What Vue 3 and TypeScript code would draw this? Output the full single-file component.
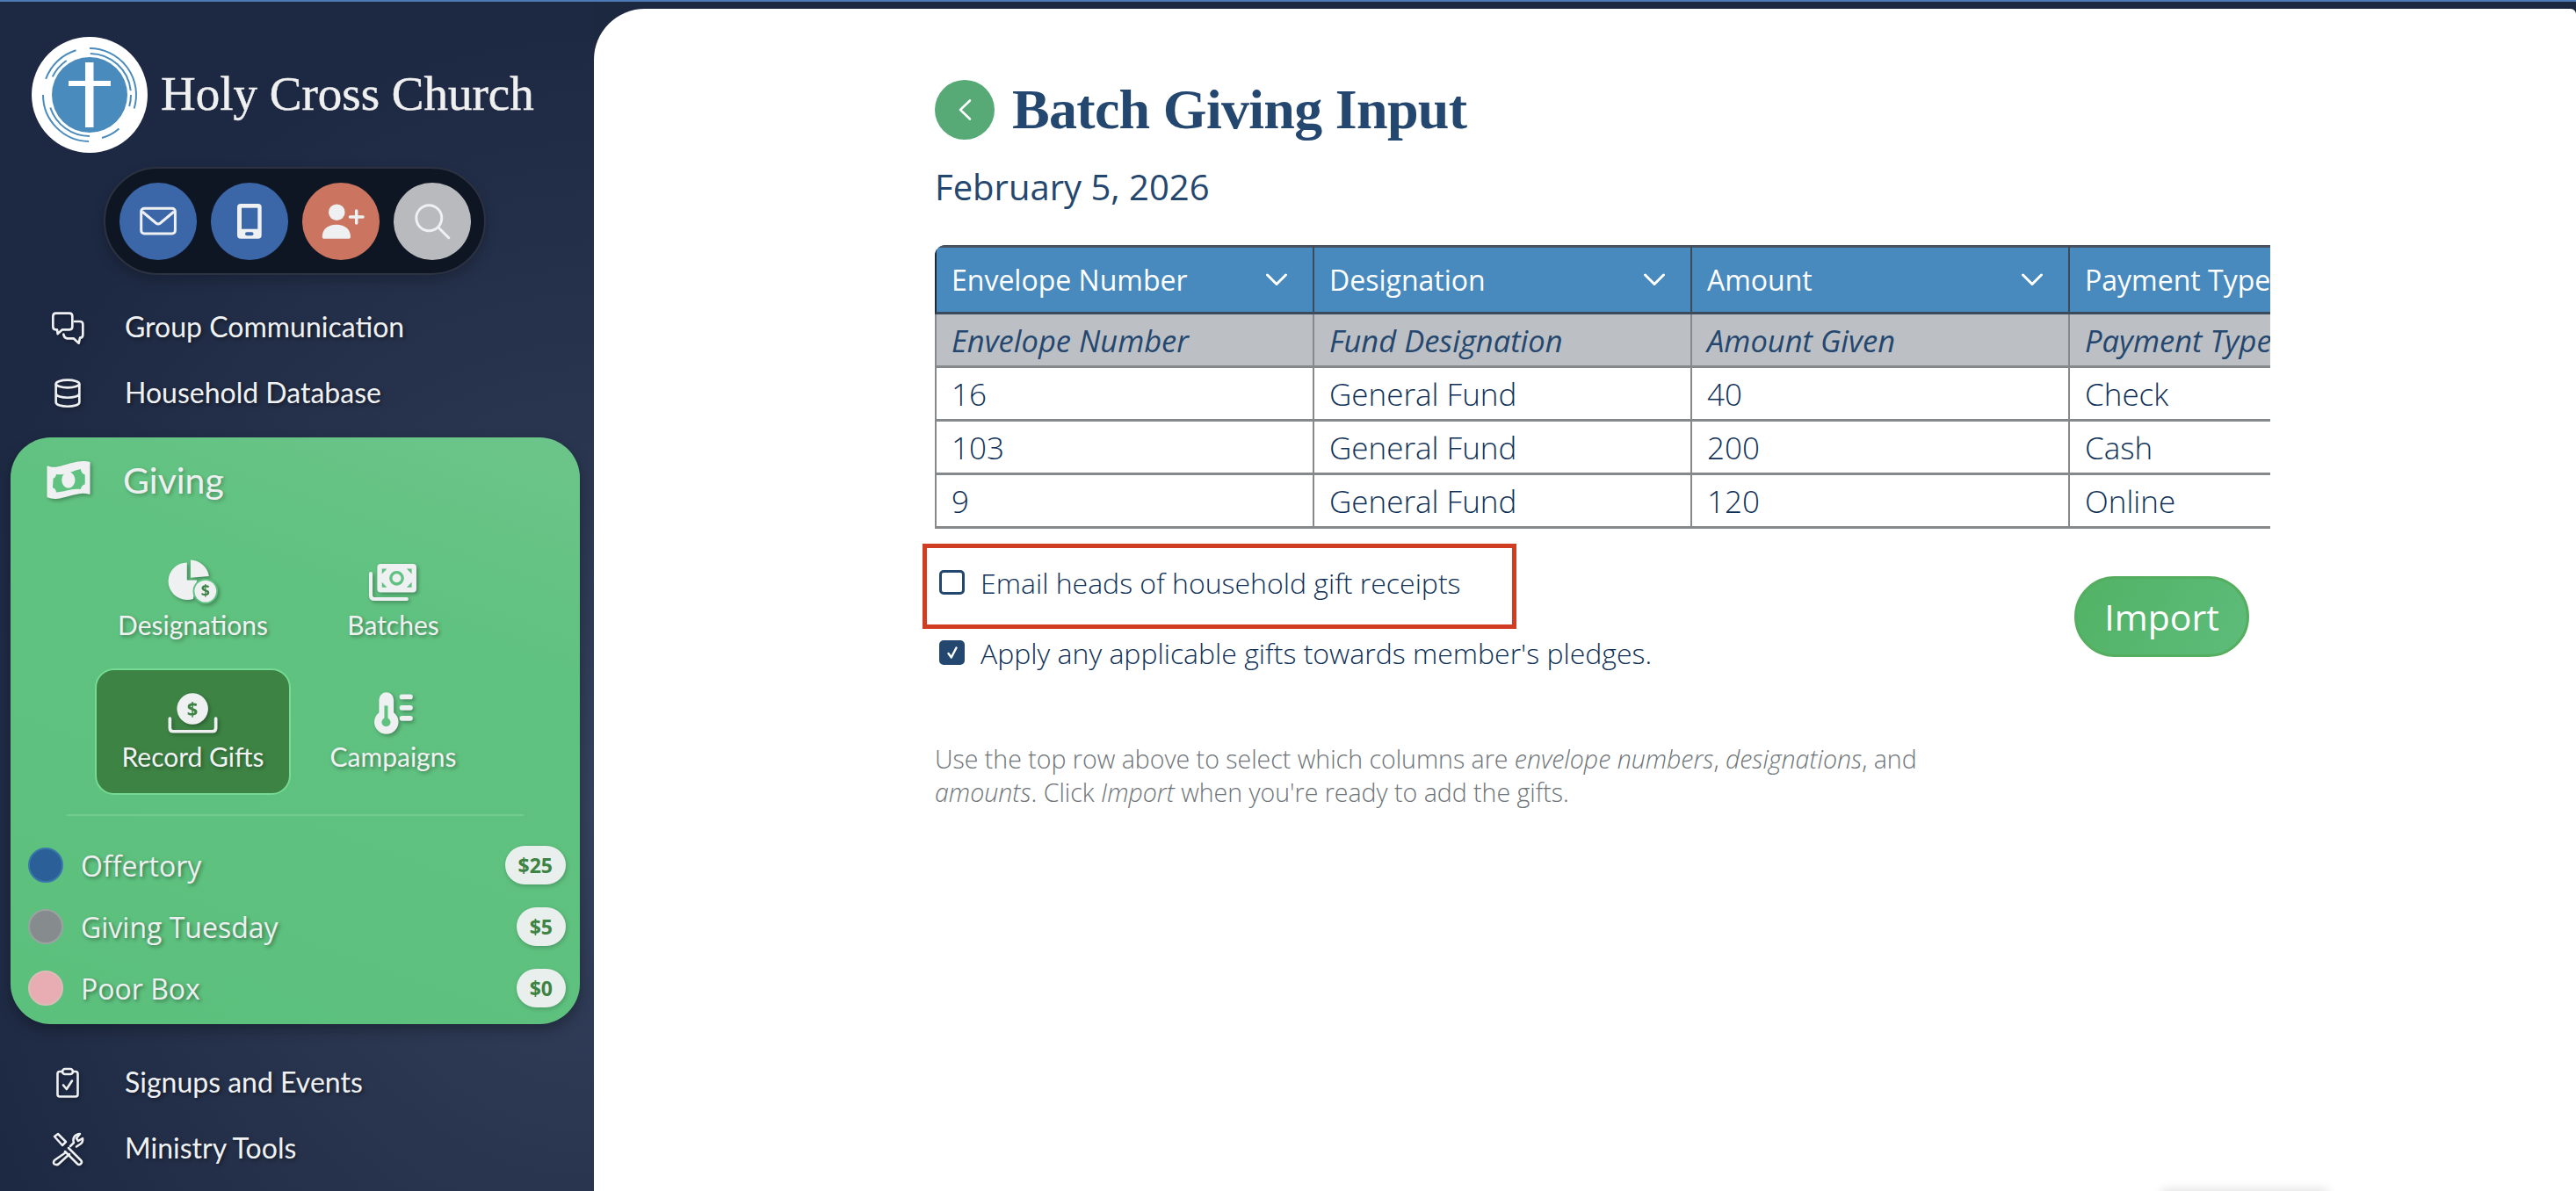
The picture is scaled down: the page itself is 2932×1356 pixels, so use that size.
<script setup lang="ts">
function arc(r: number, a: number, b: number): string {
  const p = (d: number) => {
    const t = (d * Math.PI) / 180
    return `${(66 + r * Math.sin(t)).toFixed(2)} ${(66 - r * Math.cos(t)).toFixed(2)}`
  }
  return `M${p(a)} A${r} ${r} 0 0 1 ${p(b)}`
}
const rings: string[] = [
  arc(53, 0, 107), arc(47, 1, 84), arc(47, 90, 106),
  arc(51, 139, 164), arc(53, 181, 270), arc(47, 180, 252),
  arc(53, 290, 343), arc(47, 296, 326),
]
const columns = [
  { head: 'Envelope Number', sub: 'Envelope Number', arrow: true },
  { head: 'Designation', sub: 'Fund Designation', arrow: true },
  { head: 'Amount', sub: 'Amount Given', arrow: true },
  { head: 'Payment Type', sub: 'Payment Type', arrow: false },
]
const rows = [
  ['16', 'General Fund', '40', 'Check'],
  ['103', 'General Fund', '200', 'Cash'],
  ['9', 'General Fund', '120', 'Online'],
]
const funds = [
  { name: 'Offertory', amount: '$25', cls: 'dot-blue' },
  { name: 'Giving Tuesday', amount: '$5', cls: 'dot-gray' },
  { name: 'Poor Box', amount: '$0', cls: 'dot-pink' },
]
</script>

<template>
  <div class="page">
    <div class="topline"></div>
    <div class="shell">
      <aside class="sidebar">
        <div class="brand">
          <svg class="logo" width="132" height="132" viewBox="0 0 132 132">
            <circle cx="66" cy="66" r="66" fill="#fff" />
            <circle cx="66" cy="66" r="43" fill="#4a8bbd" />
            <rect x="61" y="29" width="9.5" height="74" fill="#fff" />
            <rect x="42" y="50" width="48" height="6" fill="#fff" />
            <path v-for="d in rings" :key="d" :d="d" fill="none" stroke="#4a8bbd" stroke-width="2" />
          </svg>
          <span class="church">Holy Cross Church</span>
        </div>

        <div class="pill">
          <svg class="round" viewBox="0 0 88 88">
            <circle cx="44" cy="44" r="44" fill="#3b66a8" />
            <rect x="24.7" y="29.3" width="38.7" height="28.7" rx="3.5" fill="none" stroke="#eef0f2" stroke-width="3" />
            <path d="M26 33 L41.5 46 Q44 48 46.5 46 L62 33" fill="none" stroke="#eef0f2" stroke-width="3" />
          </svg>
          <svg class="round" viewBox="0 0 88 88">
            <circle cx="44" cy="44" r="44" fill="#3b66a8" />
            <rect x="30" y="24" width="27.7" height="39.7" rx="4" fill="#eef0f2" />
            <rect x="35" y="28.7" width="18.3" height="24" fill="#3b66a8" />
            <rect x="39" y="56.3" width="9.5" height="4" rx="2" fill="#3b66a8" />
          </svg>
          <svg class="round" viewBox="0 0 88 88">
            <circle cx="44" cy="44" r="44" fill="#cb7560" />
            <circle cx="39.3" cy="33.7" r="9.3" fill="#eef0f2" />
            <path d="M22.7 62 C22.7 53 29 47.7 38.8 47.7 S55 53 55 62 Q55 63.7 53 63.7 H24.7 Q22.7 63.7 22.7 62 Z" fill="#eef0f2" />
            <path d="M61.7 32 V46 M54.5 39 H69" stroke="#eef0f2" stroke-width="3.5" stroke-linecap="round" />
          </svg>
          <svg class="round" viewBox="0 0 88 88">
            <circle cx="44" cy="44" r="44" fill="#b9babd" />
            <circle cx="40.3" cy="40.3" r="14.5" fill="none" stroke="#eef0f2" stroke-width="3" />
            <path d="M51 51 L62.7 62.7" stroke="#eef0f2" stroke-width="3" stroke-linecap="round" />
          </svg>
        </div>

        <nav class="nav nav-top">
          <a class="nav-row">
            <span class="nav-icon">
              <svg class="ico" width="40" height="40" viewBox="50 35 120 120" fill="none" stroke="#eef0f2" stroke-width="8" stroke-linejoin="round" stroke-linecap="round">
                <path d="M70 46 H116 Q126 46 126 56 V92 Q126 102 116 102 H92 L76 116 L74 102 H70 Q60 102 60 92 V56 Q60 46 70 46 Z" />
                <path d="M134 74 H152 Q162 74 162 84 V120 Q162 130 152 130 L148 148 L130 132 H108 Q98 130 96 118" />
              </svg>
            </span>
            <span class="nav-text">Group Communication</span>
          </a>
          <a class="nav-row">
            <span class="nav-icon">
              <svg class="ico" width="40" height="40" viewBox="52 265 120 120" fill="none" stroke="#eef0f2" stroke-width="8">
                <ellipse cx="112" cy="292" rx="40" ry="13" />
                <path d="M72 292 V355 C72 374 152 374 152 355 V292 M72 325 C72 344 152 344 152 325" />
              </svg>
            </span>
            <span class="nav-text">Household Database</span>
          </a>
        </nav>

        <section class="card">
          <header class="card-head">
            <svg class="ico bill" width="53" height="47" viewBox="30 548 160 140">
              <path d="M37 572 C70 590 130 545 180 558 L180 665 C130 650 80 695 37 675 Z" fill="#eef0f2" stroke="#eef0f2" stroke-width="5" stroke-linejoin="round" />
              <path d="M56 612 C60 612 66 605 66 598 C95 604 125 585 150 580 C152 592 158 598 165 600 L165 632 C158 634 152 640 150 650 C120 645 95 660 66 660 C66 652 60 645 54 645 Z" fill="#60c280" />
              <ellipse cx="108" cy="618" rx="23" ry="28" fill="#eef0f2" />
            </svg>
            <span class="card-title">Giving</span>
          </header>

          <div class="tiles">
            <a class="tile">
              <svg class="ico" width="63" height="56" viewBox="60 30 190 170">
                <path d="M134 47 A67 67 0 0 0 134 181 Q145 181 156 178 L170 110 L134 110 Z" fill="#eef0f2" />
                <path d="M147 38 A70 70 0 0 1 213 96 L147 102 Z" fill="#eef0f2" />
                <circle cx="200" cy="150" r="45" fill="#60c280" />
                <circle cx="200" cy="150" r="39" fill="#eef0f2" />
                <text x="200" y="170" text-anchor="middle" class="ico-dollar" fill="#3d8444">$</text>
              </svg>
              <span class="tile-text">Designations</span>
            </a>
            <a class="tile">
              <svg class="ico" width="62" height="47" viewBox="745 35 185 140">
                <path d="M760 78 V152 Q760 165 773 165 H882" fill="none" stroke="#eef0f2" stroke-width="12" stroke-linecap="round" />
                <rect x="782" y="45" width="133" height="97" rx="12" fill="#eef0f2" />
                <path d="M798 62 H815 L798 80 Z M899 62 H882 L899 80 Z M798 125 H815 L798 107 Z M899 125 H882 L899 107 Z" fill="#60c280" />
                <circle cx="848" cy="94" r="20" fill="#eef0f2" stroke="#60c280" stroke-width="10" />
              </svg>
              <span class="tile-text">Batches</span>
            </a>
            <a class="tile tile-active">
              <svg class="ico" width="62" height="50" viewBox="60 485 185 150">
                <circle cx="150" cy="545" r="53" fill="#eef0f2" />
                <text x="150" y="568" text-anchor="middle" class="ico-dollar big" fill="#3d8444">$</text>
                <path d="M73 578 V610 Q73 622 85 622 H217 Q229 622 229 610 V578" fill="none" stroke="#eef0f2" stroke-width="11" stroke-linecap="round" />
              </svg>
              <span class="tile-text">Record Gifts</span>
            </a>
            <a class="tile">
              <svg class="ico" width="52" height="52" viewBox="755 478 155 155">
                <path d="M783 510 A25 25 0 0 1 833 510 V553 A41 41 0 1 1 783 553 Z" fill="#eef0f2" />
                <circle cx="807" cy="586" r="15" fill="#60c280" />
                <rect x="801" y="530" width="12" height="50" fill="#60c280" />
                <path d="M861 500 H889 M861 537 H889 M861 573 H889" stroke="#eef0f2" stroke-width="17" stroke-linecap="round" />
              </svg>
              <span class="tile-text">Campaigns</span>
            </a>
          </div>

          <div class="divider"></div>

          <ul class="funds">
            <li v-for="f in funds" :key="f.name" class="fund">
              <span class="dot" :class="f.cls"></span>
              <span class="fund-name">{{ f.name }}</span>
              <span class="fund-amt">{{ f.amount }}</span>
            </li>
          </ul>
        </section>

        <nav class="nav nav-bottom">
          <a class="nav-row">
            <span class="nav-icon">
              <svg class="ico" width="40" height="40" viewBox="0 0 40 40" fill="none" stroke="#eef0f2" stroke-width="2.6" stroke-linejoin="round" stroke-linecap="round">
                <path d="M14 7 H11 Q8.5 7 8.5 9.5 V33 Q8.5 35.5 11 35.5 H29 Q31.5 35.5 31.5 33 V9.5 Q31.5 7 29 7 H26" />
                <rect x="14" y="4" width="12" height="6" rx="3" />
                <path d="M15 22.5 L18.8 27 L25 17.5" />
              </svg>
            </span>
            <span class="nav-text">Signups and Events</span>
          </a>
          <a class="nav-row">
            <span class="nav-icon">
              <svg class="ico" width="40" height="40" viewBox="0 0 40 40" fill="none" stroke="#eef0f2" stroke-width="2.5" stroke-linejoin="round" stroke-linecap="round">
                <path d="M21 19 L35 33 Q37 35 35 37 Q33 39 31 37 L17 23" />
                <path d="M5 6 L9 3 L18 12 L14 16 Z" />
                <path d="M18 24 L5 33 Q3 36 5 37.5 Q8 39 10 37 L22 26" />
                <path d="M23 17 L27 13 Q25 7 30 4 Q32 3 34 3 L30 8 L32 11 L37 8 Q38 13 33 15.5 L30 17.5" />
              </svg>
            </span>
            <span class="nav-text">Ministry Tools</span>
          </a>
        </nav>
      </aside>

      <main class="main">
        <div class="content">
          <div class="title-row">
            <button class="back" type="button" aria-label="Back">
              <svg width="20" height="28" viewBox="0 0 20 28" fill="none" stroke="#fff" stroke-width="2.6" stroke-linecap="round" stroke-linejoin="round">
                <path d="M16 3.5 L5 14 L16 24.5" />
              </svg>
            </button>
            <h1 class="title">Batch Giving Input</h1>
          </div>
          <div class="date">February 5, 2026</div>

          <div class="table-wrap">
            <table class="table">
              <thead>
                <tr class="head-row">
                  <th v-for="c in columns" :key="c.head">
                    <span class="th-in">
                      <span>{{ c.head }}</span>
                      <svg v-if="c.arrow" width="26" height="15" viewBox="0 0 26 15" fill="none" stroke="#fff" stroke-width="3" stroke-linecap="round" stroke-linejoin="round">
                        <path d="M2.5 2 L13 12.5 L23.5 2" />
                      </svg>
                    </span>
                  </th>
                </tr>
                <tr class="sub-row">
                  <td v-for="c in columns" :key="c.sub">{{ c.sub }}</td>
                </tr>
              </thead>
              <tbody>
                <tr v-for="r in rows" :key="r[0]" class="data-row">
                  <td v-for="(v, i) in r" :key="i">{{ v }}</td>
                </tr>
              </tbody>
            </table>
          </div>

          <div class="action-row">
            <div class="checks">
              <label class="check">
                <span class="box"></span>
                <span>Email heads of household gift receipts</span>
                <span class="annotation"></span>
              </label>
              <label class="check">
                <span class="box box-on">
                  <svg width="16" height="20" viewBox="0 0 16 20" fill="none" stroke="#fff" stroke-width="2.4" stroke-linecap="round" stroke-linejoin="round">
                    <path d="M3.5 11 L6.8 15.5 L12.5 4.5" />
                  </svg>
                </span>
                <span>Apply any applicable gifts towards member's pledges.</span>
              </label>
            </div>
            <button class="import" type="button">Import</button>
          </div>

          <p class="help">
            Use the top row above to select which columns are <em>envelope numbers</em>, <em>designations</em>, and
            <em>amounts</em>. Click <em>Import</em> when you're ready to add the gifts.
          </p>
        </div>
        <div class="edge-shadow"></div>
      </main>
    </div>
  </div>
</template>

<style>
html, body { margin: 0; height: 100%; overflow: hidden; background: #1c2840; }
</style>

<style scoped>
.page { height: 1356px; display: flex; flex-direction: column; font-family: "Open Sans", "Liberation Sans", sans-serif; background: #1c2840; overflow: hidden; }
.topline { height: 2px; background: #4f79b5; flex: none; }
.shell { flex: 1; display: flex; min-height: 0; }

.sidebar {
  width: 676px; flex: none; display: flex; flex-direction: column; box-sizing: border-box;
  background: radial-gradient(ellipse 760px 900px at 100% 68%, #35425d 0%, #2a3650 45%, #1d2943 100%);
}
.brand { display: flex; align-items: center; margin: 40px 0 0 36px; gap: 15px; }
.logo { flex: none; display: block; }
.church { font-family: "Liberation Serif", serif; font-size: 55px; color: #f0f0f0; white-space: nowrap; -webkit-text-stroke: .5px #f0f0f0; padding-bottom: 4px; }
.pill {
  display: flex; gap: 16px; align-self: flex-start; margin: 16px 0 0 118px; padding: 16px; box-sizing: border-box;
  height: 123px; width: 435px; align-items: center; background: #0f1623; border: 2px solid #2c3242; border-radius: 62px;
  box-shadow: 0 6px 14px rgba(0, 0, 0, .22);
}
.round { width: 88px; height: 88px; flex: none; display: block; }

.nav { display: flex; flex-direction: column; }
.nav-top { margin-top: 22px; }
.nav-bottom { margin-top: 29px; }
.nav-row { height: 75px; display: flex; align-items: center; padding-left: 47px; }
.nav-icon { width: 60px; display: flex; justify-content: center; flex: none; }
.nav-text { margin-left: 35px; padding-bottom: 2px; font-family: Lato, sans-serif; font-size: 32px; color: #f0f1f2; text-shadow: 2px 2px 4px rgba(0, 0, 0, .45); white-space: nowrap; }
.ico { display: block; filter: drop-shadow(2px 2px 2px rgba(0, 0, 0, .3)); }

.card {
  margin: 13px 16px 0 12px; height: 668px; box-sizing: border-box; border-radius: 46px;
  background: linear-gradient(200deg, #6cc58a 0%, #60c280 30%, #5cc07d 100%);
  box-shadow: 0 6px 16px rgba(0, 0, 0, .3); display: flex; flex-direction: column;
}
.card-head { height: 96px; margin-bottom: 17px; display: flex; align-items: center; padding-left: 40px; flex: none; }
.card-title { margin-left: 35px; font-family: Lato, sans-serif; font-size: 41px; color: #eef0f0; text-shadow: 2px 2px 4px rgba(0, 0, 0, .25); }
.tiles { display: grid; grid-template-columns: 223px 223px; grid-auto-rows: 144px; gap: 6px 5px; margin-left: 96px; }
.tile { box-sizing: border-box; display: flex; flex-direction: column; align-items: center; border: 2px solid transparent; border-radius: 22px; padding-top: 22px; }
.tile .ico { height: 54px; }
.tile-active { background: #3d8444; border-color: #75da93; }
.tile-text { margin-top: 2px; line-height: 40px; font-family: Lato, sans-serif; font-size: 30px; color: #f0f2f2; text-shadow: 2px 2px 4px rgba(0, 0, 0, .35); white-space: nowrap; }
.ico-dollar { font-family: "Open Sans", sans-serif; font-weight: 700; font-size: 56px; }
.ico-dollar.big { font-size: 66px; }
.divider { height: 2px; margin: 22px 64px 0 64px; background: #74cb90; flex: none; }
.funds { list-style: none; margin: 21px 0 0; padding: 0 16px 0 20px; }
.fund { height: 70px; display: flex; align-items: center; }
.dot { width: 40px; height: 40px; box-sizing: border-box; border-radius: 50%; border: 2px solid; flex: none; }
.dot-blue { background: #2a5f98; border-color: #3a78ab; }
.dot-gray { background: #868c8d; border-color: #9aa3a1; }
.dot-pink { background: #e8adb2; border-color: #dcbcb6; }
.fund-name { margin-left: 20px; font-size: 32px; color: #eef0f0; text-shadow: 2px 2px 4px rgba(0, 0, 0, .4); flex: 1; }
.fund-amt { height: 44px; box-sizing: border-box; padding: 0 15px; display: flex; align-items: center; border-radius: 22px; background: #e8efec; color: #3d8444; font-weight: 700; font-size: 23px; box-shadow: 1px 2px 5px rgba(0, 0, 0, .2); }

.main { flex: 1; min-width: 0; margin-top: 8px; background: #fff; border-top-left-radius: 58px; border-top-right-radius: 6px; position: relative; overflow: hidden; }
.content { padding: 81px 0 0 388px; width: 1908px; box-sizing: border-box; color: #24476f; }
.title-row { display: flex; align-items: center; gap: 20px; height: 68px; }
.back { width: 68px; height: 68px; border: 0; padding: 0; border-radius: 50%; background: #57a976; display: flex; align-items: center; justify-content: center; flex: none; }
.title { margin: 0; font-family: "Liberation Serif", serif; font-weight: 700; font-size: 64px; line-height: 68px; letter-spacing: -.7px; color: #24476f; white-space: nowrap; }
.date { margin-top: 30px; font-size: 40px; line-height: 48px; }

.table-wrap { margin-top: 42px; width: 1520px; overflow: hidden; border-top-left-radius: 12px; }
.table { border-collapse: separate; border-spacing: 0; table-layout: fixed; width: 1722px; font-size: 32px; }
.table th, .table td { padding: 0 0 0 17px; box-sizing: border-box; width: 430px; text-align: left; white-space: nowrap; overflow: hidden; border-right: 2px solid #85898b; border-bottom: 3px solid #85898b; }
.table th:first-child, .table td:first-child { width: 432px; border-left: 2px solid #85898b; }
.head-row th { height: 79px; background: #488abd; color: #fff; font-weight: 400; border-top: 3px solid #47525e; border-right-color: #3c4b5c; border-bottom-color: #3c4b5c; }
.head-row th:first-child { border-left-color: #1e2a38; }
.th-in { display: flex; align-items: center; justify-content: space-between; padding-right: 28px; }
.sub-row td { height: 61px; background: #bcc0c5; font-style: italic; font-size: 34.5px; color: #24476f; }
.data-row td { height: 61px; font-weight: 300; font-size: 35px; color: #0f3158; }

.action-row { width: 1520px; margin-top: 41px; display: flex; justify-content: space-between; align-items: center; }
.checks { display: flex; flex-direction: column; gap: 40px; padding-left: 5px; font-size: 32px; font-weight: 300; color: #0f3158; }
.check { display: flex; align-items: center; gap: 18px; height: 40px; position: relative; white-space: nowrap; }
.box { width: 29px; height: 28px; box-sizing: border-box; border: 3.5px solid #24476f; border-radius: 5px; flex: none; display: flex; align-items: center; justify-content: center; }
.box-on { background: #24476f; }
.annotation { position: absolute; left: -19px; top: -24px; width: 676px; height: 97px; box-sizing: border-box; border: 5px solid #d13d22; pointer-events: none; }
.import { width: 199px; height: 92px; margin: 0 24px 2px 0; padding: 0; border: 3px solid #55ae60; border-radius: 46px; background: linear-gradient(120deg, #52b265, #5dbc7a); color: #fff; font-family: "Open Sans", sans-serif; font-size: 41px; font-weight: 400; }
.help { margin: 82px 0 0; width: 1140px; font-size: 28.5px; line-height: 38px; font-weight: 300; color: #6d7377; }

.edge-shadow { position: absolute; right: 282px; bottom: -12px; width: 190px; height: 12px; box-shadow: 0 -2px 12px rgba(0, 0, 0, .12); }
</style>
